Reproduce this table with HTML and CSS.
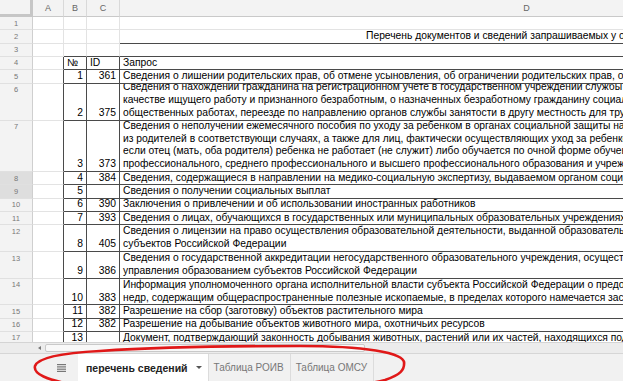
FILE: index.html
```html
<!DOCTYPE html>
<html lang="ru">
<head>
<meta charset="utf-8">
<title>Перечень сведений</title>
<link rel="stylesheet" href="styles.css">
</head>
<body>
<div class="sheet">
  <div class="grid">
    <div class="corner"></div>
    <div class="ch">A</div><div class="ch">B</div><div class="ch">C</div><div class="ch">D</div>

    <div class="rh">1</div><div class="c"></div><div class="c"></div><div class="c"></div><div class="c"></div>
    <div class="rh">2</div><div class="c"></div><div class="c"></div><div class="c"></div><div class="c title bb"><p>Перечень документов и сведений запрашиваемых у органов местного самоуправления</p></div>
    <div class="rh">3</div><div class="c"></div><div class="c bb"></div><div class="c bb"></div><div class="c bb"></div>

    <div class="rh">4</div><div class="c ta"></div><div class="c t"><p>№</p></div><div class="c t"><p>ID</p></div><div class="c t"><p>Запрос</p></div>
    <div class="rh">5</div><div class="c ta"></div><div class="c t n"><p>1</p></div><div class="c t n"><p>361</p></div><div class="c t"><p>Сведения о лишении родительских прав, об отмене усыновления, об ограничении родительских прав, о восстановлении в родительских правах</p></div>
    <div class="rh">6</div><div class="c ta"></div><div class="c t n"><p>2</p></div><div class="c t n"><p>375</p></div><div class="c t"><p>Сведения о нахождении гражданина на регистрационном учете в государственном учреждении службы занятости населения в<br>качестве ищущего работу и признанного безработным, о назначенных безработному гражданину социальных выплатах, об участии в<br>общественных работах, переезде по направлению органов службы занятости в другу местность для трудоустройства</p></div>
    <div class="rh">7</div><div class="c ta"></div><div class="c t n"><p>3</p></div><div class="c t n"><p>373</p></div><div class="c t"><p>Сведения о неполучении ежемесячного пособия по уходу за ребенком в органах социальной защиты населения одним<br>из родителей в соответствующи случаях, а также для лиц, фактически осуществляющих уход за ребенком, в случае<br>если отец (мать, оба родителя) ребенка не работает (не служит) либо обучается по очной форме обучения в образовательных<br>профессионального, среднего профессионального и высшего профессионального образования и учреждениях</p></div>
    <div class="rh sel">8</div><div class="c ta"></div><div class="c t n"><p>4</p></div><div class="c t n"><p>384</p></div><div class="c t"><p>Сведения, содержащиеся в направлении на медико-социальную экспертизу, выдаваемом органом социальной защиты населения</p></div>
    <div class="rh sel">9</div><div class="c ta"></div><div class="c t n"><p>5</p></div><div class="c t n"><p></p></div><div class="c t"><p>Сведения о получении социальных выплат</p></div>
    <div class="rh">10</div><div class="c ta"></div><div class="c t n"><p>6</p></div><div class="c t n"><p>390</p></div><div class="c t"><p>Заключения о привлечении и об использовании иностранных работников</p></div>
    <div class="rh">11</div><div class="c ta"></div><div class="c t n"><p>7</p></div><div class="c t n"><p>393</p></div><div class="c t"><p>Сведения о лицах, обучающихся в государственных или муниципальных образовательных учреждениях</p></div>
    <div class="rh">12</div><div class="c ta"></div><div class="c t n"><p>8</p></div><div class="c t n"><p>405</p></div><div class="c t"><p>Сведения о лицензии на право осуществления образовательной деятельности, выданной образовательным органом управления<br>субъектов Российской Федерации</p></div>
    <div class="rh">13</div><div class="c ta"></div><div class="c t n"><p>9</p></div><div class="c t n"><p>386</p></div><div class="c t"><p>Сведения о государственной аккредитации негосударственного образовательного учреждения, осуществляемой органом<br>управления образованием субъектов Российской Федерации</p></div>
    <div class="rh">14</div><div class="c ta"></div><div class="c t n"><p>10</p></div><div class="c t n"><p>383</p></div><div class="c t"><p>Информация уполномоченного органа исполнительной власти субъекта Российской Федерации о предоставлении участка<br>недр, содержащим общераспространенные полезные ископаемые, в пределах которого намечается застройка</p></div>
    <div class="rh">15</div><div class="c ta"></div><div class="c t n"><p>11</p></div><div class="c t n"><p>382</p></div><div class="c t"><p>Разрешение на сбор (заготовку) объектов растительного мира</p></div>
    <div class="rh">16</div><div class="c ta"></div><div class="c t n"><p>12</p></div><div class="c t n"><p>382</p></div><div class="c t"><p>Разрешение на добывание объектов животного мира, охотничьих ресурсов</p></div>
    <div class="rh">17</div><div class="c ta"></div><div class="c t n"><p>13</p></div><div class="c t n"><p></p></div><div class="c t"><p>Документ, подтверждающий законность добывания животных, растений или их частей, находящихся под охраной</p></div>
  </div>

  <div class="hscroll">
    <span class="arrow"></span>
    <span class="thumb"></span>
  </div>

  <div class="tabs">
    <span class="menu">
      <svg width="9" height="8" viewBox="0 0 9 8"><rect x="0" y="0" width="9" height="1.2" fill="#777"/><rect x="0" y="2.3" width="9" height="1.2" fill="#777"/><rect x="0" y="4.6" width="9" height="1.2" fill="#777"/><rect x="0" y="6.8" width="9" height="1.2" fill="#777"/></svg>
    </span>
    <span class="tab active">перечень сведений<span class="caret"></span></span>
    <span class="tab">Таблица РОИВ</span>
    <span class="tab">Таблица ОМСУ</span>
  </div>

  <svg class="annot" width="623" height="381" viewBox="0 0 623 381">
    <path d="M404 364 C407 352 360 346 300 346 C240 346 160 347 100 351 C60 353 38 358 35 366 C33 374 48 380 70 384 C150 396 330 394 385 380 C400 375 405 370 404 362" fill="none" stroke="#e01818" stroke-width="2.6" stroke-linecap="round"/>
  </svg>
</div>
</body>
</html>
```

FILE: styles.css
```css
* { box-sizing: border-box; }
html, body { margin: 0; padding: 0; background: #fff; }
body { font-family: "Liberation Sans", Arial, sans-serif; }

.sheet {
  position: relative;
  width: 623px;
  height: 381px;
  overflow: hidden;
  display: flex;
  flex-direction: column;
}

.grid {
  height: 342px;
  flex: none;
  overflow: hidden;
  display: grid;
  grid-template-columns: 33px 31px 23px 33px 814px;
  grid-template-rows: 17px repeat(5, 13.33px) 37px 51.4px repeat(4, 13.33px) repeat(3, 26.67px) repeat(3, 13.33px);
}

.corner {
  background: #f3f3f3;
  border-right: 3px solid #c6c6c6;
  border-bottom: 3px solid #c6c6c6;
}

.ch {
  background: #f3f3f3;
  color: #666;
  font-size: 9px;
  line-height: 17px;
  text-align: center;
  border-right: 1px solid #d9d9d9;
  border-bottom: 1px solid #c9c9c9;
}

.rh {
  background: #f3f3f3;
  color: #777;
  font-size: 7.5px;
  line-height: 12px;
  text-align: center;
  padding-top: 0.5px;
  border-right: 1px solid #cfcfcf;
  border-bottom: 1px solid #e0e0e0;
}
.rh.sel { background: #dedede; }

.c {
  display: flex;
  flex-direction: column;
  justify-content: flex-end;
  overflow: hidden;
  white-space: nowrap;
  color: #000;
  font-size: 10.3px;
  line-height: 12.8px;
  padding: 0 2px 0 3px;
  border-right: 1px solid #e3e3e3;
  border-bottom: 1px solid #e3e3e3;
}
.c p { margin: 0; }

.c.t { border-right-color: #4a4a4a; border-bottom-color: #4a4a4a; }
.c.ta { border-right-color: #4a4a4a; }
.c.bb { border-bottom-color: #4a4a4a; }
.c.n { text-align: right; padding-right: 3px; }
.c.title { padding-left: 246px; }

.hscroll {
  height: 11px;
  flex: none;
  display: flex;
  align-items: center;
  padding-left: 38px;
  gap: 4px;
  background: #ececec;
  border-top: 1px solid #d4d4d4;
}
.arrow {
  width: 0; height: 0;
  border-top: 2.5px solid transparent;
  border-bottom: 2.5px solid transparent;
  border-right: 3px solid #777;
}
.thumb {
  width: 320px;
  height: 8px;
  background: #f8f8f8;
  border: 1px solid #c9c9c9;
  border-radius: 2px;
}

.tabs {
  flex: 1;
  display: flex;
  align-items: stretch;
  background: #f1f1f1;
  border-top: 1px solid #d6d6d6;
  padding-left: 57px;
}
.menu {
  display: flex;
  align-items: center;
  width: 21px;
}
.menu svg { display: block; }
.tab {
  display: flex;
  align-items: center;
  padding: 0 6px 0 5px;
  font-size: 10px;
  color: #777;
  border-right: 1px solid #dcdcdc;
}
.tab.active {
  background: #fff;
  color: #222;
  font-weight: bold;
  font-size: 10.5px;
  padding: 0 6px 0 8px;
}
.caret {
  width: 0; height: 0;
  border-left: 3px solid transparent;
  border-right: 3px solid transparent;
  border-top: 3.5px solid #555;
  margin-left: 8px;
}

.annot {
  position: absolute;
  left: 0;
  top: 0;
  pointer-events: none;
}
```
